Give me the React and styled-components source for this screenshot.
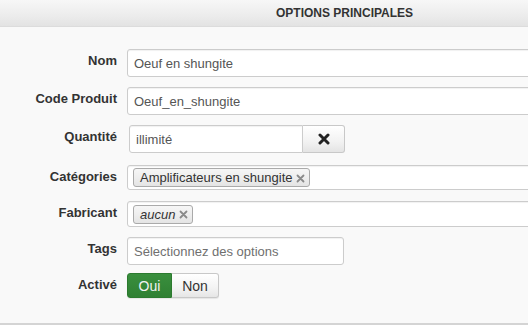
import React from 'react'
import styled, { createGlobalStyle } from 'styled-components'

const Global = createGlobalStyle`
  html, body {
    margin: 0;
    padding: 0;
    background: #f9f9f9;
    overflow: hidden;
  }
  body {
    font-family: "Liberation Sans", Arial, sans-serif;
    font-size: 13px;
    color: #333;
  }
`

const Page = styled.div`
  width: 528px;
  height: 325px;
  overflow: hidden;
  display: flex;
  flex-direction: column;
`

const Header = styled.div`
  height: 26px;
  border-bottom: 1px solid #dcdcdc;
  background: linear-gradient(to bottom, #f7f7f7 0%, #ececec 60%, #e3e3e3 100%);
  padding-left: 276px;
  font-size: 12px;
  font-weight: bold;
  line-height: 26px;
  color: #333;
  white-space: nowrap;
`

const Body = styled.div`
  flex: 1;
  padding-top: 22px;
  border-bottom: 2px solid #d4d4d4;
  display: flex;
  flex-direction: column;
`

const Row = styled.div`
  display: flex;
  align-items: flex-start;
  margin-bottom: ${p => p.$gap}px;
`

const Label = styled.label`
  flex: 0 0 117px;
  margin-right: 10px;
  padding-top: 2px;
  text-align: right;
  font-weight: bold;
  line-height: 20px;
  color: #333;
  white-space: nowrap;
`

const Input = styled.div`
  box-sizing: border-box;
  flex: 0 0 ${p => p.$w}px;
  width: ${p => p.$w}px;
  height: ${p => p.$h || 28}px;
  background: #fff;
  border: 1px solid #ccc;
  border-radius: ${p => p.$radius || '3px'};
  box-shadow: inset 0 1px 1px rgba(0, 0, 0, 0.06);
  padding: 0 ${p => p.$pad || 6}px;
  display: flex;
  align-items: center;
  gap: 4px;
  color: ${p => (p.$placeholder ? '#6f6f6f' : '#555')};
  white-space: nowrap;
`

const Group = styled.div`
  display: flex;
  margin-left: 2px;
`

const ClearButton = styled.div`
  box-sizing: border-box;
  width: 42px;
  height: 28px;
  border: 1px solid #c8c8c8;
  border-left: none;
  border-radius: 0 3px 3px 0;
  background: linear-gradient(to bottom, #ffffff 0%, #f2f2f2 60%, #e4e4e4 100%);
  display: flex;
  align-items: center;
  justify-content: center;
`

const Tag = styled.span`
  box-sizing: border-box;
  height: 19px;
  display: inline-flex;
  align-items: center;
  padding: 0 4px 0 6px;
  gap: 4px;
  border: 1px solid #aaa;
  border-radius: 3px;
  background: linear-gradient(to bottom, #f6f6f6 0%, #eeeeee 50%, #e4e4e4 100%);
  color: #333;
  font-size: 13px;
  font-style: ${p => (p.$italic ? 'italic' : 'normal')};
`

const TagClose = styled.svg`
  flex: 0 0 auto;
  margin-top: 1px;
`

const Toggle = styled.div`
  display: flex;
  height: 25px;
  border-radius: 3px;
  box-shadow: 0 1px 1px rgba(0, 0, 0, 0.08);
`

const ToggleButton = styled.div`
  box-sizing: border-box;
  width: ${p => p.$w}px;
  height: 25px;
  display: flex;
  align-items: center;
  justify-content: center;
  font-size: 14px;
  border: 1px solid ${p => (p.$active ? '#2c7a2f' : '#c8c8c8')};
  border-left: ${p => (p.$active ? undefined : 'none')};
  border-radius: ${p => (p.$active ? '3px 0 0 3px' : '0 3px 3px 0')};
  background: ${p =>
    p.$active
      ? 'linear-gradient(to bottom, #3a8f3d 0%, #2f8033 100%)'
      : 'linear-gradient(to bottom, #ffffff 0%, #f3f3f3 60%, #e6e6e6 100%)'};
  color: ${p => (p.$active ? '#f2f2f2' : '#333')};
`

const CrossIcon = () => (
  <svg width="12" height="12" viewBox="0 0 12 12">
    <path d="M2 2 L10 10 M10 2 L2 10" stroke="#222" strokeWidth="3" strokeLinecap="round" />
  </svg>
)

const Close = () => (
  <TagClose width="9" height="9" viewBox="0 0 9 9">
    <path d="M1.5 1.5 L7.5 7.5 M7.5 1.5 L1.5 7.5" stroke="#8a8a8a" strokeWidth="1.8" strokeLinecap="round" />
  </TagClose>
)

export default function App() {
  return (
    <Page>
      <Global />
      <Header>OPTIONS PRINCIPALES</Header>
      <Body>
        <Row $gap={10}>
          <Label>Nom</Label>
          <Input $w={460}>Oeuf en shungite</Input>
        </Row>
        <Row $gap={10}>
          <Label>Code Produit</Label>
          <Input $w={460}>Oeuf_en_shungite</Input>
        </Row>
        <Row $gap={12}>
          <Label>Quantité</Label>
          <Group>
            <Input $w={174} $radius="3px 0 0 3px">illimité</Input>
            <ClearButton>
              <CrossIcon />
            </ClearButton>
          </Group>
        </Row>
        <Row $gap={11}>
          <Label>Catégories</Label>
          <Input $w={460} $h={25} $pad={5}>
            <Tag>
              Amplificateurs en shungite<Close />
            </Tag>
          </Input>
        </Row>
        <Row $gap={10}>
          <Label>Fabricant</Label>
          <Input $w={460} $h={26} $pad={5}>
            <Tag $italic>
              aucun<Close />
            </Tag>
          </Input>
        </Row>
        <Row $gap={8}>
          <Label>Tags</Label>
          <Input $w={217} $placeholder>Sélectionnez des options</Input>
        </Row>
        <Row $gap={0}>
          <Label>Activé</Label>
          <Toggle>
            <ToggleButton $active $w={45}>Oui</ToggleButton>
            <ToggleButton $w={47}>Non</ToggleButton>
          </Toggle>
        </Row>
      </Body>
    </Page>
  )
}
